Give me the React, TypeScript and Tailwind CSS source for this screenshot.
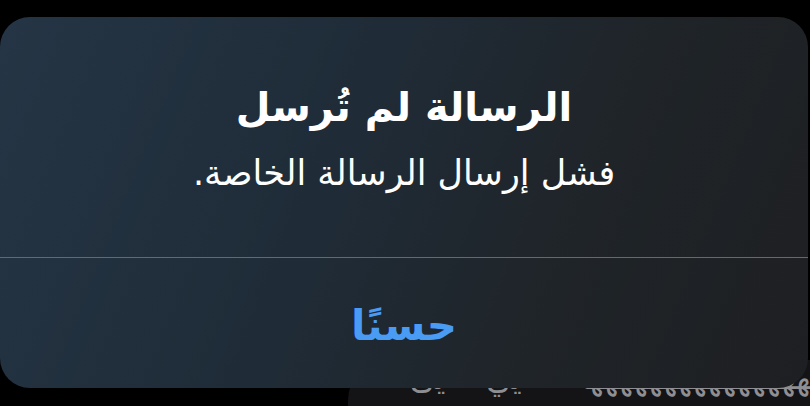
export default function App() {
  return (
    <div
      dir="rtl"
      className="relative w-[810px] h-[406px] overflow-hidden bg-black font-['DejaVu_Sans',sans-serif]"
    >
      {/* message behind the alert */}
      <div className="absolute left-[348px] top-[360px] w-[520px] h-[80px] rounded-tl-[40px] bg-[#141416] overflow-hidden">
        <p className="absolute right-[-4px] top-[-2px] whitespace-nowrap text-[32px] leading-[40px] text-[#8e8e93]">
          هههههههههههههههههههه &nbsp;&nbsp;&nbsp;&nbsp;يي &nbsp;&nbsp;&nbsp;يى
        </p>
      </div>

      {/* alert */}
      <div className="absolute left-0 top-[17px] w-[808px] h-[371px] rounded-[30px] flex flex-col overflow-hidden bg-[linear-gradient(112deg,#253545_0%,#1f2c38_40%,#1f2428_70%,#1e1f22_100%)]">
        <div className="h-[240px] flex flex-col items-center pt-[62px] text-white">
          <h2 className="text-[40px] leading-[56px] font-bold">الرسالة لم تُرسل</h2>
          <p className="text-[35px] leading-[48px] mt-[14px]">فشل إرسال الرسالة الخاصة.</p>
        </div>
        <div className="h-px bg-[#5f6a74]" />
        <button className="flex-1 flex items-center justify-center pt-[4px] text-[42px] font-bold text-[#4a9bf4]">
          حسنًا
        </button>
      </div>
    </div>
  );
}
